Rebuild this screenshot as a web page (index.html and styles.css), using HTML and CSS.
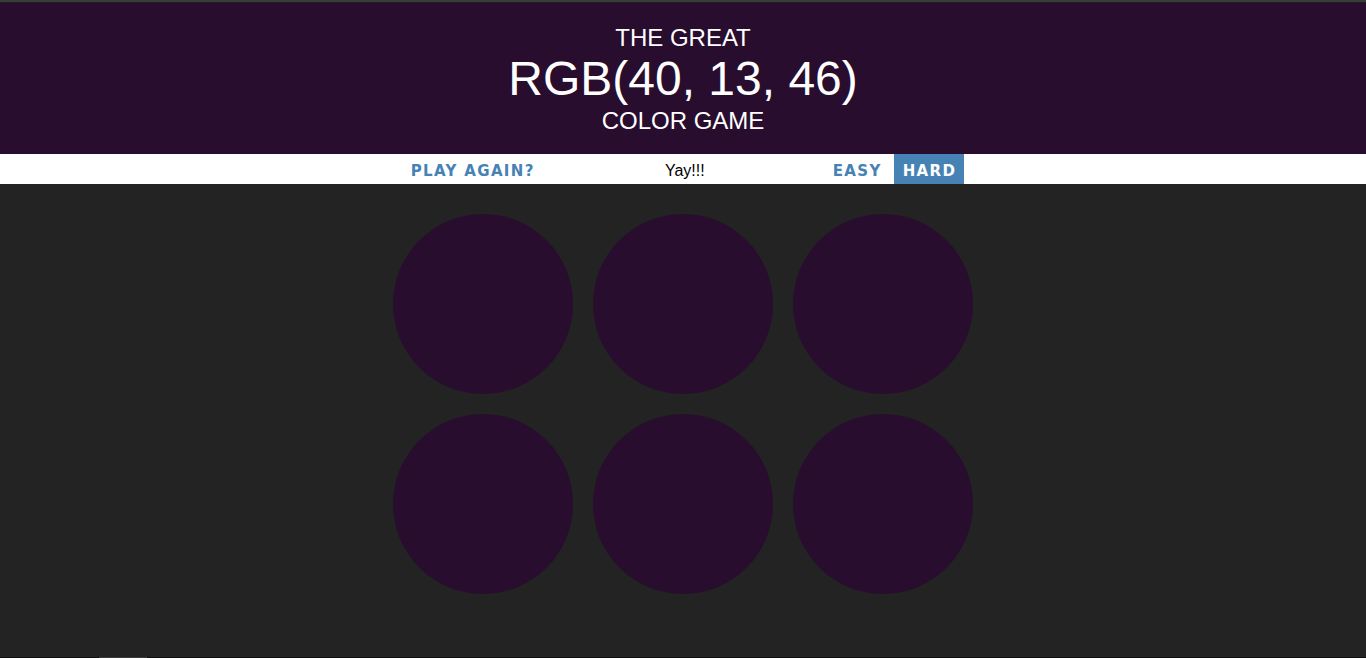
FILE: index.html
```html
<!DOCTYPE html>
<html lang="en">
<head>
<meta charset="utf-8">
<title>Color Game</title>
<link rel="stylesheet" href="styles.css">
</head>
<body>
<div class="topbar"></div>
<h1 class="title">
  <span class="title-line">The Great</span>
  <span class="title-rgb">RGB(40, 13, 46)</span>
  <span class="title-line">Color Game</span>
</h1>
<nav class="stripe">
  <button class="btn">Play Again?</button>
  <span class="message">Yay!!!</span>
  <button class="btn">Easy</button>
  <button class="btn selected">Hard</button>
</nav>
<main class="board">
  <div class="grid">
    <div class="square"></div>
    <div class="square"></div>
    <div class="square"></div>
    <div class="square"></div>
    <div class="square"></div>
    <div class="square"></div>
  </div>
</main>
<div class="bottombar"><div class="thumb"></div></div>
</body>
</html>
```
FILE: styles.css
```css
* { box-sizing: border-box; }
html, body { margin: 0; padding: 0; }
body {
  background: #232323;
  font-family: "Liberation Sans", Arial, sans-serif;
  min-height: 100vh;
  display: flex;
  flex-direction: column;
}
.topbar {
  height: 3px;
  background: #3a3a3a;
  border-bottom: 1px solid #1f1f1f;
}
.title {
  margin: 0;
  background: rgb(40, 13, 46);
  color: #fff;
  font-weight: normal;
  text-transform: uppercase;
  text-align: center;
  display: flex;
  flex-direction: column;
  align-items: center;
  padding: 22px 0 0;
  height: 151px;
}
.title-line {
  font-size: 24px;
  line-height: 26px;
}
.title-rgb {
  font-size: 48px;
  line-height: 57px;
  margin-top: -1px;
  margin-bottom: 1px;
}
.stripe {
  background: #fff;
  height: 30px;
  display: flex;
  justify-content: center;
  align-items: stretch;
  gap: 4px;
}
.btn {
  border: none;
  background: none;
  margin: 0;
  padding: 3px 8px 0 9px;
  height: 30px;
  font-family: "DejaVu Sans", Verdana, sans-serif;
  font-weight: bold;
  font-size: 15px;
  letter-spacing: 1.35px;
  text-transform: uppercase;
  color: steelblue;
}
.btn.selected {
  background: steelblue;
  color: #fff;
}
.message {
  width: 273px;
  text-align: center;
  font-size: 16px;
  line-height: 30px;
  padding: 2px 0 0 3px;
  color: #000;
}
.board { flex: 1; }
.grid {
  width: 600px;
  margin: 20px auto;
  display: flex;
  flex-wrap: wrap;
}
.square {
  width: 180px;
  height: 180px;
  margin: 10px;
  border-radius: 50%;
  background: rgb(40, 13, 46);
}
.bottombar {
  height: 1px;
  background: #0e0e0e;
}
.thumb {
  margin-left: 99px;
  width: 48px;
  height: 1px;
  background: #3a3a3a;
}
```
